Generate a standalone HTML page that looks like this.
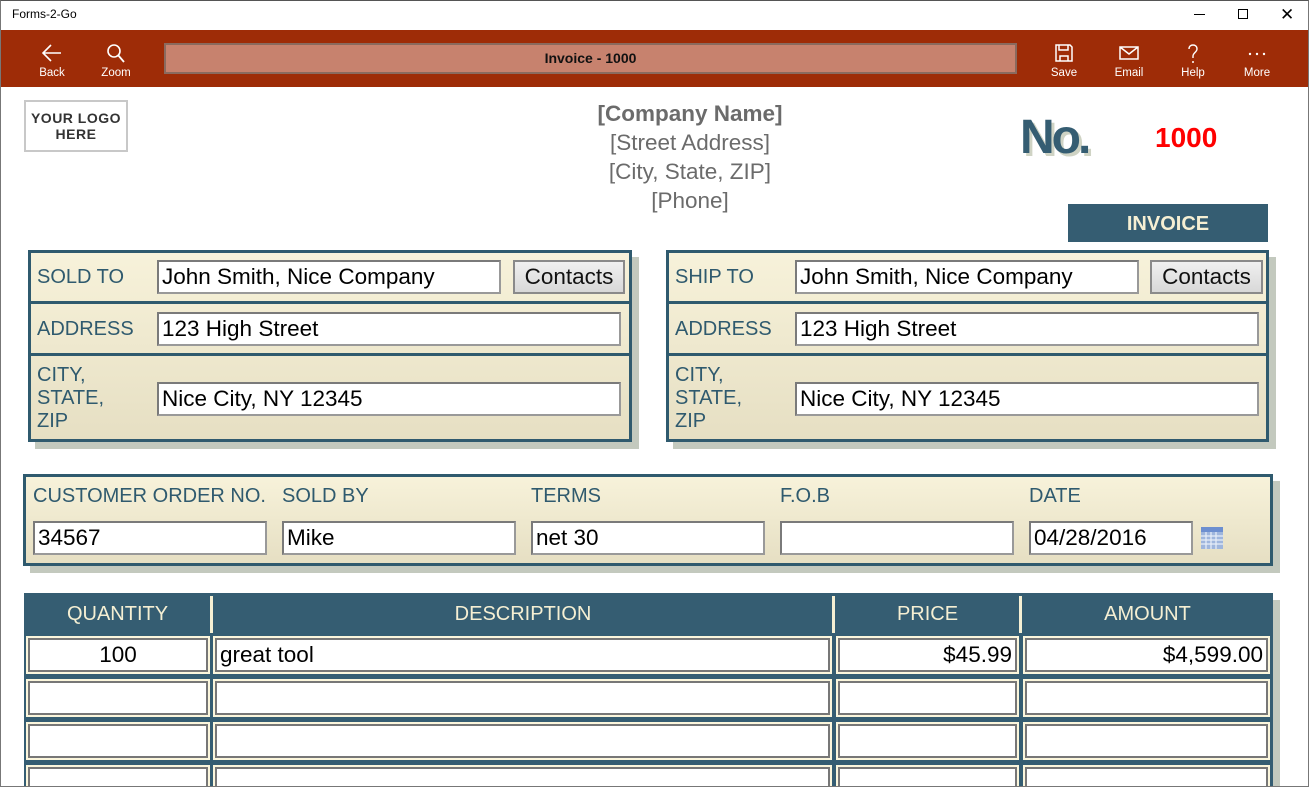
<!DOCTYPE html>
<html><head><meta charset="utf-8"><style>
*{box-sizing:border-box;margin:0;padding:0}
html,body{width:1309px;height:787px;overflow:hidden}
body{background:#fff;font-family:"Liberation Sans",Arial,sans-serif;position:relative}
.a{position:absolute}
#win{position:absolute;left:0;top:0;width:1309px;height:787px;border:1px solid #777;border-top-color:#555;pointer-events:none;z-index:10}
.tb{color:#fff;font-size:11.5px;text-align:center;width:50px}
.tb svg{display:block;margin:0 auto 4px}
.box{background:linear-gradient(#f7f2da,#e6dfc3);border:3px solid #2f5a6e;box-shadow:7px 7px 0 #c3c9be}
.lbl{color:#2f5a6e;font-size:20px;position:absolute}
.in{position:absolute;background:#fff;border:2px solid #7a7a7a;border-right-color:#999;border-bottom-color:#999;font-size:22.5px;color:#000;padding-left:3px;line-height:30px;height:34px;white-space:nowrap}
.btn{position:absolute;background:linear-gradient(#f0f0f0,#d8d8d8);border:2px solid #8a8a8a;font-size:22.5px;text-align:center;line-height:29px;height:34px;color:#111}
.sep{position:absolute;height:3px;background:#2f5a6e}
.th{position:absolute;top:0;height:40px;background:#355d72;color:#f5efd3;font-size:20px;text-align:center;line-height:42px}
.cell{position:absolute;height:38px;background:#fbf6dc;padding:2px}
.cell div{width:100%;height:100%;background:#fff;border:2px solid #777;font-size:22.5px;line-height:30px;padding:0 3px}
#tbl{position:absolute;left:24px;top:593px;width:1265px;height:194px;overflow:hidden}
</style></head><body>
<div id="win"></div>
<div class="a" style="left:12px;top:7px;font-size:12px;color:#000">Forms-2-Go</div>
<div class="a" style="left:1194px;top:14px;width:11px;height:1px;background:#000"></div>
<div class="a" style="left:1238px;top:9px;width:10px;height:10px;border:1px solid #000"></div>
<div class="a" style="left:1280px;top:5px;font-size:17px;color:#000">✕</div>
<div class="a" style="left:1px;top:30px;width:1307px;height:57px;background:#9e2c07"></div>
<div class="a tb" style="left:27px;top:43px"><svg width="22" height="20" viewBox="0 0 22 20"><path d="M20 10H3M10 2L2 10l8 8" stroke="#fff" stroke-width="1.6" fill="none"/></svg>Back</div>
<div class="a tb" style="left:91px;top:43px"><svg width="22" height="20" viewBox="0 0 22 20"><circle cx="9" cy="8" r="6" stroke="#fff" stroke-width="1.6" fill="none"/><path d="M13 12l6 7" stroke="#fff" stroke-width="1.8"/></svg>Zoom</div>
<div class="a" style="left:164px;top:43px;width:853px;height:31px;background:#c7826e;border:2px solid #8a6a5e;font-size:14px;font-weight:bold;text-align:center;line-height:27px;color:#111">Invoice - 1000</div>
<div class="a tb" style="left:1039px;top:43px"><svg width="22" height="20" viewBox="0 0 22 20"><path d="M3 2h14l2 2v14H3z M6 2v5h9V2 M7 18v-5h8v5" stroke="#fff" stroke-width="1.5" fill="none"/></svg>Save</div>
<div class="a tb" style="left:1104px;top:43px"><svg width="22" height="20" viewBox="0 0 22 20"><path d="M2 4h18v12H2z M2 4l9 7 9-7" stroke="#fff" stroke-width="1.5" fill="none"/></svg>Email</div>
<div class="a tb" style="left:1168px;top:43px"><svg width="22" height="20" viewBox="0 0 22 20"><path d="M7 6c0-3 2-4 4-4s4 1 4 4-4 4-4 7v2" stroke="#fff" stroke-width="1.4" fill="none"/><circle cx="11" cy="19" r="1" fill="#fff"/></svg>Help</div>
<div class="a tb" style="left:1232px;top:43px"><svg width="22" height="20" viewBox="0 0 22 20"><circle cx="4" cy="11" r="1.2" fill="#fff"/><circle cx="11" cy="11" r="1.2" fill="#fff"/><circle cx="18" cy="11" r="1.2" fill="#fff"/></svg>More</div>

<div class="a" style="left:24px;top:100px;width:104px;height:52px;border:2px solid #c8c8c8;text-align:center;font-size:14px;font-weight:bold;color:#333;line-height:16px;padding-top:8px;letter-spacing:0.5px">YOUR LOGO<br>HERE</div>
<div class="a" style="left:490px;top:99px;width:400px;text-align:center;color:#6b6b6b;font-size:22.5px;line-height:29px"><b>[Company Name]</b><br>[Street Address]<br>[City, State, ZIP]<br>[Phone]</div>
<div class="a" style="left:1020px;top:110px;font-size:48px;font-weight:bold;color:#355d72;letter-spacing:-3px;text-shadow:3px 3px 0 #cfd3c4">No.</div>
<div class="a" style="left:1155px;top:122px;font-size:28px;font-weight:bold;color:#f00">1000</div>
<div class="a" style="left:1068px;top:204px;width:200px;height:38px;background:#355d72;color:#f5efd3;font-size:20px;font-weight:bold;text-align:center;line-height:40px">INVOICE</div>

<div class="a box" style="left:28px;top:250px;width:604px;height:192px"></div>
<div class="sep" style="left:30px;top:301px;width:600px"></div>
<div class="sep" style="left:30px;top:353px;width:600px"></div>
<div class="lbl" style="left:37px;top:266px">SOLD TO</div>
<div class="lbl" style="left:37px;top:318px">ADDRESS</div>
<div class="lbl" style="left:37px;top:364px;line-height:23px">CITY,<br>STATE,<br>ZIP</div>
<div class="in" style="left:157px;top:260px;width:344px">John Smith, Nice Company</div>
<div class="btn" style="left:513px;top:260px;width:112px">Contacts</div>
<div class="in" style="left:157px;top:312px;width:464px">123 High Street</div>
<div class="in" style="left:157px;top:382px;width:464px">Nice City, NY 12345</div>

<div class="a box" style="left:666px;top:250px;width:603px;height:192px"></div>
<div class="sep" style="left:668px;top:301px;width:599px"></div>
<div class="sep" style="left:668px;top:353px;width:599px"></div>
<div class="lbl" style="left:675px;top:266px">SHIP TO</div>
<div class="lbl" style="left:675px;top:318px">ADDRESS</div>
<div class="lbl" style="left:675px;top:364px;line-height:23px">CITY,<br>STATE,<br>ZIP</div>
<div class="in" style="left:795px;top:260px;width:344px">John Smith, Nice Company</div>
<div class="btn" style="left:1150px;top:260px;width:113px">Contacts</div>
<div class="in" style="left:795px;top:312px;width:464px">123 High Street</div>
<div class="in" style="left:795px;top:382px;width:464px">Nice City, NY 12345</div>

<div class="a box" style="left:23px;top:474px;width:1250px;height:92px"></div>
<div class="lbl" style="left:33px;top:485px">CUSTOMER ORDER NO.</div>
<div class="lbl" style="left:282px;top:485px">SOLD BY</div>
<div class="lbl" style="left:531px;top:485px">TERMS</div>
<div class="lbl" style="left:780px;top:485px">F.O.B</div>
<div class="lbl" style="left:1029px;top:485px">DATE</div>
<div class="in" style="left:33px;top:521px;width:234px">34567</div>
<div class="in" style="left:282px;top:521px;width:234px">Mike</div>
<div class="in" style="left:531px;top:521px;width:234px">net 30</div>
<div class="in" style="left:780px;top:521px;width:234px"></div>
<div class="in" style="left:1029px;top:521px;width:164px">04/28/2016</div>
<svg class="a" style="left:1201px;top:527px" width="22" height="22" viewBox="0 0 22 22"><rect x="0" y="0" width="22" height="22" fill="#9fb6dd"/><rect x="0" y="0" width="22" height="5" fill="#6d8fd0"/><path d="M0 9h22M0 13h22M0 17h22M5 5v17M10 5v17M15 5v17" stroke="#e8eef8" stroke-width="1.2"/></svg>

<div id="tbl">
<div class="a" style="left:0;top:0;width:1249px;height:220px;background:#355d72;box-shadow:7px 7px 0 #c3c9be"></div>
<div class="th" style="left:0;width:187px">QUANTITY</div>
<div class="th" style="left:189px;width:620px">DESCRIPTION</div>
<div class="th" style="left:811px;width:185px">PRICE</div>
<div class="th" style="left:998px;width:251px">AMOUNT</div>
<div class="a" style="left:186px;top:3px;width:3px;height:37px;background:#f5efd3"></div>
<div class="a" style="left:808px;top:3px;width:3px;height:37px;background:#f5efd3"></div>
<div class="a" style="left:995px;top:3px;width:3px;height:37px;background:#f5efd3"></div>

<div class="cell" style="left:2px;top:43px;width:184px"><div style="text-align:center">100</div></div>
<div class="cell" style="left:189px;top:43px;width:619px"><div>great tool</div></div>
<div class="cell" style="left:812px;top:43px;width:183px"><div style="text-align:right">$45.99</div></div>
<div class="cell" style="left:999px;top:43px;width:247px"><div style="text-align:right">$4,599.00</div></div>

<div class="cell" style="left:2px;top:86px;width:184px"><div></div></div>
<div class="cell" style="left:189px;top:86px;width:619px"><div></div></div>
<div class="cell" style="left:812px;top:86px;width:183px"><div></div></div>
<div class="cell" style="left:999px;top:86px;width:247px"><div></div></div>

<div class="cell" style="left:2px;top:129px;width:184px"><div></div></div>
<div class="cell" style="left:189px;top:129px;width:619px"><div></div></div>
<div class="cell" style="left:812px;top:129px;width:183px"><div></div></div>
<div class="cell" style="left:999px;top:129px;width:247px"><div></div></div>

<div class="cell" style="left:2px;top:172px;width:184px"><div></div></div>
<div class="cell" style="left:189px;top:172px;width:619px"><div></div></div>
<div class="cell" style="left:812px;top:172px;width:183px"><div></div></div>
<div class="cell" style="left:999px;top:172px;width:247px"><div></div></div>
</div>
</body></html>
